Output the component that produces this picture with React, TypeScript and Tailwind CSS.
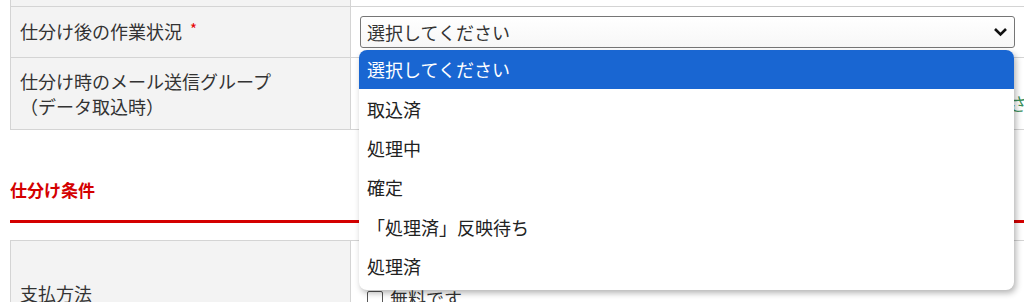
const OPTIONS = ["選択してください", "取込済", "処理中", "確定", "「処理済」反映待ち", "処理済"];

const font = "font-['Noto_Sans_CJK_JP','Noto_Sans',sans-serif]";

export default function App() {
  return (
    <div className={`relative w-[1024px] h-[302px] overflow-hidden bg-white text-[#333] ${font}`}>
      {/* upper table */}
      <div className="ml-[10px] w-[1040px] border-l border-[#d4d4d4]">
        <div className="flex h-[7px] border-b border-[#d4d4d4]">
          <div className="w-[340px] bg-[#f3f3f3] border-r border-[#d4d4d4]" />
          <div className="flex-1" />
        </div>
        <div className="flex h-[51px] border-b border-[#d4d4d4]">
          <div className="w-[340px] bg-[#f3f3f3] border-r border-[#d4d4d4] flex items-center pl-[9px] pb-[2px] text-[18px] leading-[25px]">
            仕分け後の作業状況
            <span className="ml-[8px] -mt-[6px] text-[15px] text-[#e60000]">*</span>
          </div>
          <div className="flex-1 flex items-center pl-[9px]">
            <div className="w-[655px] h-[32px] border border-[#767676] rounded-[3px] bg-gradient-to-b from-white to-[#f7f7f7] flex items-center justify-between pl-[6px] pr-[6px] text-[18px]">
              <span>選択してください</span>
              <svg width="15" height="10" viewBox="0 0 15 10">
                <path d="M2 2 L7.5 7.5 L13 2" fill="none" stroke="#111" strokeWidth="2.6" />
              </svg>
            </div>
          </div>
        </div>
        <div className="flex h-[72px] border-b border-[#d4d4d4]">
          <div className="w-[340px] bg-[#f3f3f3] border-r border-[#d4d4d4] flex flex-col justify-center pl-[9px] text-[18px] leading-[25px]">
            <span>仕分け時のメール送信グループ</span>
            <span>（データ取込時）</span>
          </div>
          <div className="flex-1 flex items-center justify-end pr-[5px] pt-[20px] text-[18px] text-[#3b8f5a]">
            グループを選択してください
          </div>
        </div>
      </div>

      {/* section heading */}
      <div className="ml-[10px] mt-[48px] text-[17px] leading-[24px] font-bold text-[#d40000]">仕分け条件</div>
      <div className="ml-[10px] mt-[18px] h-[3px] bg-[#d40000]" />

      {/* lower table */}
      <div className="ml-[10px] mt-[17px] w-[1040px] border-l border-t border-[#d4d4d4] flex h-[120px]">
        <div className="w-[340px] bg-[#f3f3f3] border-r border-[#d4d4d4] pl-[9px] pt-[40px] text-[18px] leading-[25px]">
          支払方法
        </div>
        <div className="flex-1 flex items-start gap-[7px] pl-[16px] pt-[45px] text-[18px] leading-[25px]">
          <span className="mt-[5px] w-[16px] h-[16px] border border-[#555] rounded-[2px] bg-white" />
          <span>無料です</span>
        </div>
      </div>

      {/* open dropdown list */}
      <div className="absolute left-[359px] top-[50px] w-[655px] h-[240px] bg-white rounded-[8px] overflow-hidden shadow-[2px_3px_6px_rgba(0,0,0,0.3)]">
        {OPTIONS.map((o, i) => (
          <div
            key={o}
            className={
              i === 0
                ? "h-[39.4px] flex items-center pl-[8px] text-[18px] bg-[#1966d2] text-white"
                : "h-[39.4px] flex items-center pl-[8px] text-[18px] text-[#222]"
            }
          >
            {o}
          </div>
        ))}
      </div>
    </div>
  );
}
